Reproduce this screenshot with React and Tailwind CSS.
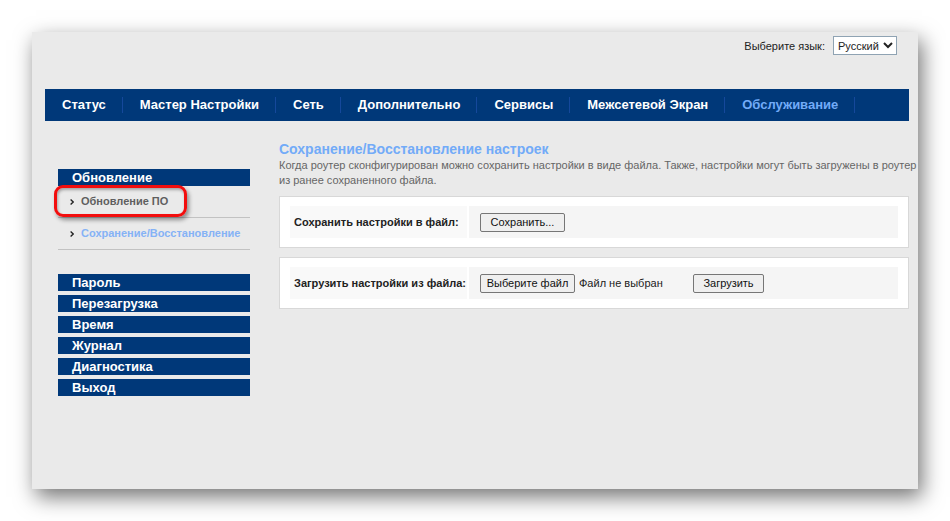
import { useRef, useState } from 'react';

const NAV_ITEMS = [
  'Статус',
  'Мастер Настройки',
  'Сеть',
  'Дополнительно',
  'Сервисы',
  'Межсетевой Экран',
  'Обслуживание',
];

const SECTIONS = ['Пароль', 'Перезагрузка', 'Время', 'Журнал', 'Диагностика', 'Выход'];

function LanguageBar() {
  const [lang, setLang] = useState('ru');

  return (
    <div className="flex items-center justify-end gap-2 pr-[21px] pt-1">
      <label htmlFor="lang" className="leading-4">Выберите язык:</label>
      <select
        id="lang"
        value={lang}
        onChange={(e) => setLang(e.target.value)}
        className="h-[19px] w-16 border border-[#8fa3b3] bg-white text-[11px] text-[#222]"
      >
        <option value="ru">Русский</option>
        <option value="en">English</option>
      </select>
    </div>
  );
}

function TopNav() {
  const active = 'Обслуживание';

  return (
    <nav className="flex h-8 items-center bg-[#003879] text-[13px] font-bold">
      {NAV_ITEMS.map((item) => (
        <a
          key={item}
          href="#"
          className={`border-r border-[#15489b] pr-4 pl-[17px] leading-4 ${item === active ? 'text-[#72abf8]' : 'text-white'}`}
        >
          {item}
        </a>
      ))}
    </nav>
  );
}

function Marker() {
  return (
    <svg className="h-[6px] w-1 shrink-0" viewBox="0 0 4 6" fill="none" stroke="#222" strokeWidth="1.3">
      <path d="M0.6 0.5L3.2 3L0.6 5.5" />
    </svg>
  );
}

function SectionLink({ children }) {
  return (
    <a href="#" className="block h-[17px] bg-[#003879] pl-[14px] text-[13px] leading-[17px] font-bold text-white">
      {children}
    </a>
  );
}

function Sidebar() {
  return (
    <aside className="w-48 shrink-0 pt-8">
      <SectionLink>Обновление</SectionLink>
      <ul className="font-bold">
        <li className="relative border-b border-[#c2c2c2]">
          <a href="#" className="flex h-[31px] items-center gap-[7px] pl-3 text-[#5f5f5f]">
            <Marker />
            Обновление ПО
          </a>
          {/* Highlight frame */}
          <span className="pointer-events-none absolute -top-px -left-1 h-8 w-[133px] rounded-[9px] border-[3px] border-[#f20d0d] shadow-[2px_3px_4px_rgba(0,0,0,0.4),inset_1px_2px_3px_rgba(0,0,0,0.3)]" />
        </li>
        <li className="border-b border-[#c2c2c2]">
          <a href="#" className="flex h-[31px] items-center gap-[7px] pl-3 whitespace-nowrap text-[#85b2f6]">
            <Marker />
            Сохранение/Восстановление
          </a>
        </li>
      </ul>
      <div className="mt-6 flex flex-col gap-1">
        {SECTIONS.map((name) => (
          <SectionLink key={name}>{name}</SectionLink>
        ))}
      </div>
    </aside>
  );
}

function FormButton({ className = '', ...props }) {
  return (
    <button
      type="button"
      className={`h-[19px] rounded-[2px] border border-[#767676] bg-[#efefef] text-[11px] leading-4 text-[#111] ${className}`}
      {...props}
    />
  );
}

function FormRow({ label, children }) {
  return (
    <div className="border border-[#d8d8d8] bg-white px-[10px] py-[9px]">
      <div className="flex h-8 gap-[2px]">
        <div className="flex w-[177px] shrink-0 items-center bg-[#f9f9f9] pl-1 font-bold whitespace-nowrap text-[#222]">
          {label}
        </div>
        <div className="flex flex-1 items-center bg-[#f5f5f5] pl-[11px]">{children}</div>
      </div>
    </div>
  );
}

export default function App() {
  const fileInput = useRef(null);
  const [fileName, setFileName] = useState('');

  return (
    <div className="min-h-screen bg-white p-8 font-['Liberation_Sans',Arial,sans-serif] text-[11px] text-[#222]">
      <div className="min-h-[457px] bg-[#eaeaea] shadow-[4px_8px_20px_rgba(0,0,0,0.55)]">
        <LanguageBar />
        <div className="pt-[34px] pr-[9px] pl-[13px]">
          <TopNav />
          <div className="flex gap-[29px] pt-4 pl-[13px]">
            <Sidebar />
            <main className="min-w-0 flex-1">
              <h1 className="pt-1 text-[14px] leading-[17px] font-bold text-[#72abf8]">
                Сохранение/Восстановление настроек
              </h1>
              <p className="-mr-2 leading-[15px] text-[#666]">
                Когда роутер сконфигурирован можно сохранить настройки в виде файла. Также, настройки могут быть
                загружены в роутер из ранее сохраненного файла.
              </p>
              <form className="mt-2 flex flex-col gap-[9px]">
                <FormRow label={<span>Сохранить настройки в файл:</span>}>
                  <FormButton className="w-[85px]">Сохранить...</FormButton>
                </FormRow>
                <FormRow label={<label htmlFor="config">Загрузить настройки из файла:</label>}>
                  <input
                    ref={fileInput}
                    id="config"
                    type="file"
                    className="hidden"
                    onChange={(e) => setFileName(e.target.files[0]?.name || '')}
                  />
                  <FormButton className="w-[95px]" onClick={() => fileInput.current.click()}>
                    Выберите файл
                  </FormButton>
                  <span className="ml-1 w-[114px] truncate">{fileName || 'Файл не выбран'}</span>
                  <FormButton className="w-[71px]">Загрузить</FormButton>
                </FormRow>
              </form>
            </main>
          </div>
        </div>
      </div>
    </div>
  );
}
